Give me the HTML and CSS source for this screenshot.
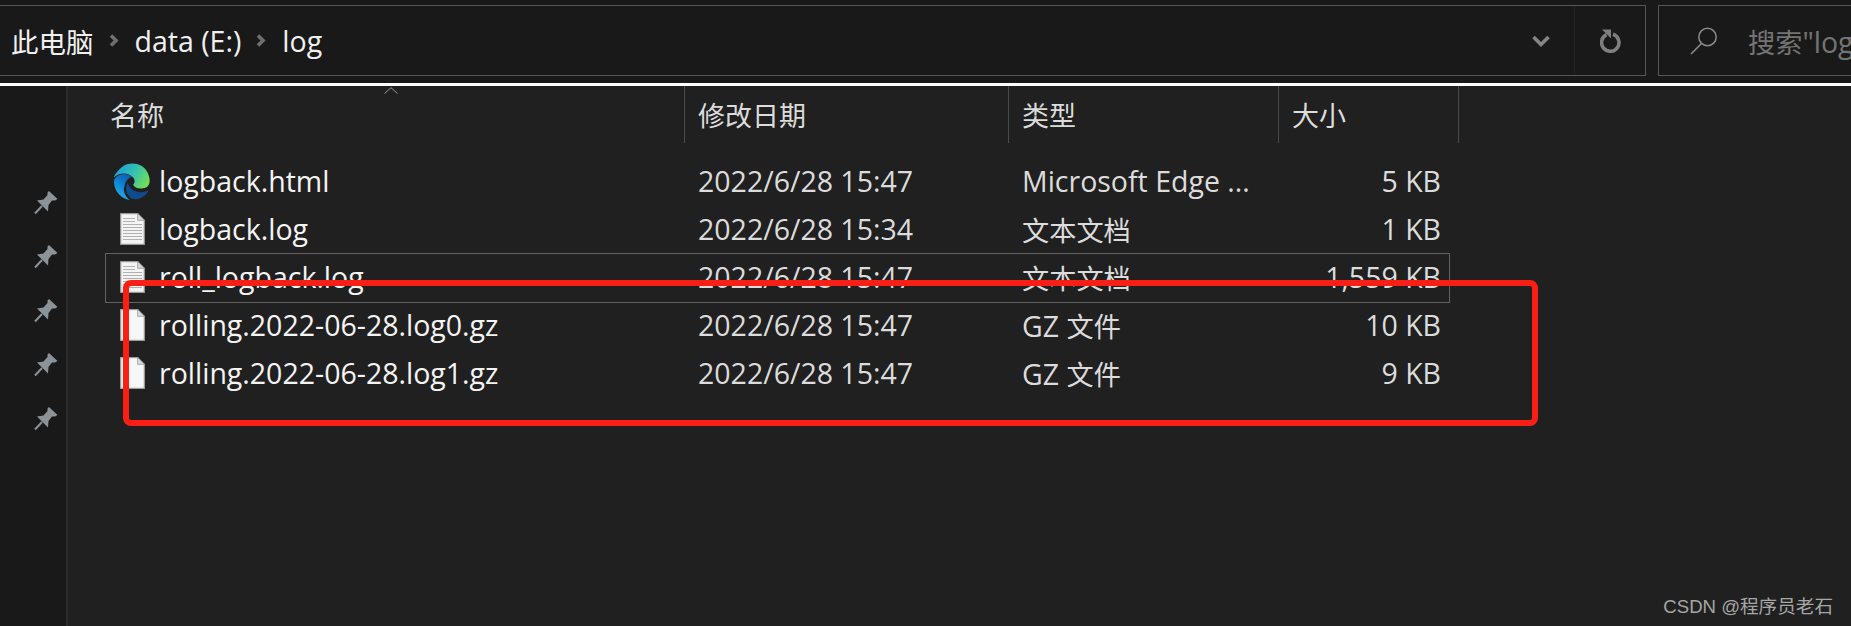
FILE: index.html
```html
<!DOCTYPE html>
<html lang="zh">
<head>
<meta charset="utf-8">
<title>log</title>
<link rel="stylesheet" href="styles.css">
</head>
<body>
<svg class="defs" width="0" height="0" aria-hidden="true">
  <defs>
    <linearGradient id="edgeGreen" x1="0.1" y1="0.2" x2="1" y2="0.6"><stop offset="0" stop-color="#1f9fd8"/><stop offset="0.5" stop-color="#35c1b0"/><stop offset="1" stop-color="#6fdc5a"/></linearGradient>
    <linearGradient id="edgeBlue" x1="0.8" y1="0" x2="0.3" y2="1"><stop offset="0" stop-color="#0c59a4"/><stop offset="0.5" stop-color="#0f86d6"/><stop offset="1" stop-color="#26b0e8"/></linearGradient>
    <linearGradient id="edgeDark" x1="0" y1="0" x2="1" y2="0.5"><stop offset="0" stop-color="#0c4c95"/><stop offset="1" stop-color="#114a8b"/></linearGradient>
    <symbol id="pin" viewBox="0 0 24 24"><path d="M15 0L23.500 8 21 9.500H18L14.500 14 14 20.500 3 9.500 9.500 8.500 13.500 4V1.500z" fill="#8b9399"/><path d="M8 15L1 22.500" fill="none" stroke="#8b9399" stroke-width="2"/></symbol>
    <symbol id="doc-text" viewBox="0 0 25 32"><path d="M.7.7h17l6.600 6.600v24H.7z" fill="#f4f4f4" stroke="#9a9a9a" stroke-width="1.200"/><path d="M17.700.7v6.600h6.600z" fill="#d8d8d8" stroke="#a8a8a8"/><path d="M3 5.500h12M3 8.500h12M3 11.500h19M3 14.500h19M3 17.500h19M3 20.500h19M3 23.500h19M3 26.500h19" stroke="#b0b0b0" stroke-width="1.200"/></symbol>
    <symbol id="doc-blank" viewBox="0 0 25 32"><path d="M.7.7h17l6.600 6.600v24H.7z" fill="#f6f7f9" stroke="#a0a0a0" stroke-width="1.200"/><path d="M17.700.7v6.600h6.600z" fill="#dcdcdc" stroke="#a8a8a8"/></symbol>
  </defs>
</svg>
<header class="toolbar">
  <div class="address">
    <nav class="crumbs">
      <span class="cjk-root">此电脑</span>
      <svg class="crumb-arrow" viewBox="0 0 11 15"><path d="M2 2.500l5 5-5 5" fill="none" stroke="#6f6f6f" stroke-width="3.600"/></svg>
      <span>data (E:)</span>
      <svg class="crumb-arrow" viewBox="0 0 11 15"><path d="M2 2.500l5 5-5 5" fill="none" stroke="#6f6f6f" stroke-width="3.600"/></svg>
      <span>log</span>
    </nav>
    <svg class="chevron" viewBox="0 0 18 12"><path d="M1.500 2l7.500 7.500L16.500 2" fill="none" stroke="#858585" stroke-width="3.600"/></svg>
    <div class="refresh-cell">
      <svg class="refresh" viewBox="0 0 22 24"><path d="M13 5.300a8.700 8.700 0 1 1-6.500.4" fill="none" stroke="#7e7e7e" stroke-width="3.600"/><path d="M2 .5h9v9z" fill="#7e7e7e"/></svg>
    </div>
  </div>
  <div class="search">
    <svg class="search-icon" viewBox="0 0 28 28"><circle cx="17.500" cy="10" r="8.700" fill="none" stroke="#8a8a8a" stroke-width="1.500"/><path d="M11.500 16.500L1 27" fill="none" stroke="#8a8a8a" stroke-width="1.600"/></svg>
    <span class="search-text"><span class="cjk">搜索</span>"log"</span>
  </div>
</header>
<div class="rule"></div>
<main class="main">
  <aside class="side">
    <svg class="pin"><use href="#pin"/></svg>
    <svg class="pin"><use href="#pin"/></svg>
    <svg class="pin"><use href="#pin"/></svg>
    <svg class="pin"><use href="#pin"/></svg>
    <svg class="pin"><use href="#pin"/></svg>
  </aside>
  <section class="list">
    <svg class="sort-caret" viewBox="0 0 14 7"><path d="M.5 6.500L7 .7l6.500 5.800" fill="none" stroke="#9a9a9a"/></svg>
    <div class="head">
      <div class="hcell hcell-name">名称</div>
      <div class="hcell">修改日期</div>
      <div class="hcell">类型</div>
      <div class="hcell">大小</div>
    </div>
    <div class="row">
      <div class="name"><span class="icon"><svg class="edge" viewBox="0 0 24 24">
        <path fill="url(#edgeDark)" d="M21.860 17.860q.14 0 .25.12.1.13.1.25t-.11.33l-.32.46-.43.53-.44.5q-.21.25-.38.42l-.22.23q-.58.53-1.340 1.040-.76.51-1.600.91-.86.4-1.740.64t-1.670.24q-.9 0-1.690-.28-.8-.28-1.480-.78-.68-.5-1.220-1.170-.53-.66-.92-1.440-.38-.77-.58-1.600-.2-.83-.2-1.670 0-1 .32-1.960.33-.97.87-1.800.14.95.55 1.770.41.82 1.020 1.500.6.68 1.380 1.210.78.54 1.640.9.86.36 1.770.56.92.2 1.800.2 1.120 0 2.180-.24 1.060-.23 2.060-.72l.2-.1.2-.05z"/>
        <path fill="url(#edgeBlue)" d="M6.360 16.590q0 1.100.27 2.150.27 1.060.78 2.030.51.96 1.240 1.770.74.82 1.660 1.400-1.470-.2-2.800-.74-1.330-.55-2.480-1.370-1.150-.83-2.080-1.900-.92-1.070-1.580-2.330T.36 14.940Q0 13.540 0 12.060q0-.81.32-1.490.31-.68.83-1.230.53-.55 1.200-.96.66-.4 1.350-.66.74-.27 1.500-.39.78-.12 1.550-.12.7 0 1.420.1.72.12 1.400.35.68.23 1.320.57.63.35 1.160.83-.35 0-.7.07-.33.07-.65.23v-.02q-.63.28-1.200.74-.57.46-1.050 1.040-.48.58-.84 1.260-.37.67-.55 1.410-.19.74-.19 1.370z"/>
        <path fill="url(#edgeGreen)" d="M12 .25q1.560 0 3 .41 1.430.41 2.670 1.160 1.240.76 2.260 1.800 1 1.040 1.730 2.330.7 1.280 1.100 2.740.37 1.460.37 3 0 1.210-.42 2.130-.41.91-1.160 1.530-.74.62-1.750.93-1 .31-2.150.31-.72 0-1.530-.16-.81-.16-1.550-.45-.74-.3-1.300-.79-.56-.48-.77-1.150.06-.17.2-.4.14-.22.3-.49.15-.27.27-.58.12-.3.12-.7 0-.69-.28-1.400-.28-.7-.8-1.270-1.120-1.200-2.660-1.780-1.540-.57-3.130-.57-1.900 0-3.630.69-1.730.7-3.070 1.980.5-1.650 1.560-3.030Q3.970 3.400 5.370 2.400q1.400-1 3.060-1.570Q10.080.25 12 .25z"/>
      </svg></span><span>logback.html</span></div>
      <div class="cell">2022/6/28 15:47</div>
      <div class="cell">Microsoft Edge ...</div>
      <div class="size">5 KB</div>
    </div>
    <div class="row">
      <div class="name"><span class="icon"><svg class="doc"><use href="#doc-text"/></svg></span><span>logback.log</span></div>
      <div class="cell">2022/6/28 15:34</div>
      <div class="cell cjk">文本文档</div>
      <div class="size">1 KB</div>
    </div>
    <div class="row row-focus">
      <div class="name"><span class="icon"><svg class="doc"><use href="#doc-text"/></svg></span><span>roll_logback.log</span></div>
      <div class="cell">2022/6/28 15:47</div>
      <div class="cell cjk">文本文档</div>
      <div class="size">1,559 KB</div>
    </div>
    <div class="row">
      <div class="name"><span class="icon"><svg class="doc"><use href="#doc-blank"/></svg></span><span>rolling.2022-06-28.log0.gz</span></div>
      <div class="cell">2022/6/28 15:47</div>
      <div class="cell">GZ <span class="cjk">文件</span></div>
      <div class="size">10 KB</div>
    </div>
    <div class="row">
      <div class="name"><span class="icon"><svg class="doc"><use href="#doc-blank"/></svg></span><span>rolling.2022-06-28.log1.gz</span></div>
      <div class="cell">2022/6/28 15:47</div>
      <div class="cell">GZ <span class="cjk">文件</span></div>
      <div class="size">9 KB</div>
    </div>
  </section>
</main>
<div class="red-box"></div>
<div class="watermark">CSDN @程序员老石</div>
</body>
</html>
```

FILE: styles.css
```css
* { box-sizing: border-box; }
html, body { margin: 0; height: 100%; }
body {
  width: 1851px;
  height: 626px;
  overflow: hidden;
  position: relative;
  background: #202020;
  color: #e6e6e6;
  font-family: "Open Sans", "Noto Sans CJK SC", sans-serif;
  font-size: 28.500px;
}
.cjk { font-size: 27.200px; }
.cjk-root { font-size: 27.500px; }
.defs { position: absolute; }

.toolbar {
  height: 83px;
  background: #191919;
  padding-top: 5px;
  display: flex;
  gap: 12px;
  overflow: hidden;
}
.address {
  flex: 0 0 1646px;
  height: 71px;
  border: 1px solid #565656;
  border-left: 0;
  display: flex;
  align-items: center;
}
.crumbs {
  flex: 1;
  display: flex;
  align-items: center;
  gap: 15px;
  padding-left: 11px;
  color: #f0f0f0;
}
.crumb-arrow { width: 11px; height: 15px; }
.chevron { width: 18px; height: 12px; margin-right: 24px; }
.refresh-cell {
  width: 71px;
  height: 100%;
  border-left: 1px solid #222;
  display: flex;
  align-items: center;
  justify-content: center;
}
.refresh { width: 22px; height: 24px; margin-left: 2px; }
.search {
  flex: 0 0 400px;
  height: 71px;
  border: 1px solid #565656;
  display: flex;
  align-items: center;
  padding-left: 31px;
  gap: 30px;
  color: #747474;
}
.search-icon { width: 28px; height: 28px; }
.search-text { white-space: nowrap; }

.rule { height: 3px; background: #fff; }

.main { display: flex; height: 540px; }
.side {
  flex: 0 0 68px;
  background: #191919;
  border-right: 2px solid #2b2b2b;
  padding: 105px 0 0 34px;
  display: flex;
  flex-direction: column;
  gap: 30px;
}
.pin { width: 24px; height: 24px; }

.list { flex: 1; padding-left: 38px; }
.sort-caret {
  position: absolute;
  left: 384px;
  top: 87px;
  width: 14px;
  height: 7px;
}
.head {
  display: grid;
  grid-template-columns: 579px 324px 270px 180px;
  height: 57px;
  margin-bottom: 15px;
  color: #dcdcdc;
  font-size: 27px;
}
.hcell {
  display: flex;
  align-items: center;
  padding-left: 13px;
  border-right: 1px solid #4a4a4a;
}
.hcell-name { padding-left: 4px; }

.row {
  display: grid;
  grid-template-columns: 579px 324px 270px 170px;
  height: 48px;
  padding-bottom: 2px;
  align-items: center;
  width: 1343px;
}
.row-focus { outline: 1px solid #626262; }
.name { display: flex; align-items: center; color: #f4f4f4; white-space: nowrap; }
.icon {
  flex: 0 0 38px;
  margin: 0 8px 0 7px;
  display: flex;
  justify-content: center;
}
.edge { width: 37px; height: 37px; }
.doc { width: 25px; height: 32px; }
.cell { padding-left: 13px; color: #dcdcdc; white-space: nowrap; }
.size { text-align: right; padding-right: 8px; color: #dcdcdc; white-space: nowrap; }

.red-box {
  position: absolute;
  left: 123px;
  top: 280px;
  width: 1415px;
  height: 146px;
  border: 6px solid #fa1e14;
  border-radius: 8px;
}
.watermark {
  position: absolute;
  right: 18px;
  bottom: 8px;
  font-family: "Liberation Sans", "Noto Sans CJK SC", sans-serif;
  font-size: 18.600px;
  color: #a6a6a6;
}
```
